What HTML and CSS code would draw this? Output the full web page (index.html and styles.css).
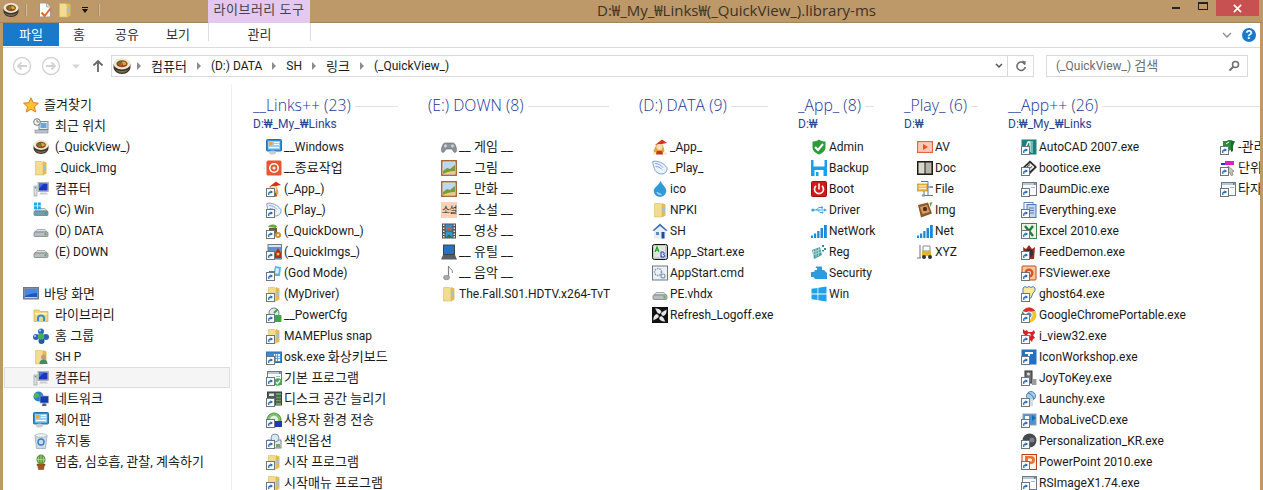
FILE: index.html
```html
<!DOCTYPE html>
<html lang="ko">
<head>
<meta charset="utf-8">
<title>(_QuickView_)</title>
<link rel="stylesheet" href="styles.css">
</head>
<body>
<svg class="defs" aria-hidden="true">
<defs>
<symbol id="kimbap" viewBox="0 0 16 16"><path d="M.5 6.500v2.500c0 3 3.200 6 7.500 6s7.500-3 7.500-6V6.500z" fill="#3a3226"/><path d="M1.500 10c1.500 3 4 4 6.500 4s5-1 6.500-4c-1 1.500-3 2.500-6.500 2.500S2.500 11.500 1.500 10z" fill="#7a6d58"/><ellipse cx="8" cy="6" rx="7.500" ry="5" fill="#efe7d0"/><ellipse cx="8" cy="6" rx="5" ry="3.200" fill="#8f4b26"/><path d="M4 6l3-2 2 1-2 3z" fill="#4d8a36"/><path d="M8 4l3 .5 1 2-3 1z" fill="#e1a92e"/><circle cx="7" cy="7" r="1" fill="#d94a2c"/></symbol>
<symbol id="folder" viewBox="0 0 16 16"><path d="M2.500 1.500h6l1.500 1v12.500H2.500z" fill="#f2dc8f" stroke="#d8b860" stroke-width=".6"/><path d="M10 1l3.500 1.500v11L10 15.500z" fill="#e3bb52"/><path d="M10.500 6l2.500-1v5l-2.500 1z" fill="#9fc1d8"/></symbol>
<symbol id="docchk" viewBox="0 0 16 16"><path d="M2.500 1h7l4 4v10h-11z" fill="#fff" stroke="#999"/><path d="M9.500 1v4h4" fill="#ddd" stroke="#999" stroke-width=".7"/><path d="M4.500 10.500l3 3.500 6-7.500" fill="none" stroke="#dd6a2c" stroke-width="2"/></symbol>
<symbol id="star" viewBox="0 0 16 16"><path d="M8 .8l2.200 4.800 5.200.6-3.900 3.500 1.100 5.200L8 12.300l-4.600 2.600 1.100-5.200L.6 6.200l5.200-.6z" fill="#fbc52f" stroke="#e07a1e"/></symbol>
<symbol id="recent" viewBox="0 0 16 16"><rect x="6" y="3.500" width="9" height="8" fill="#dfe7ee" stroke="#7c8994"/><rect x="7.500" y="5" width="6" height="5" fill="#6fa3d8"/><rect x="2" y="12" width="13" height="3" fill="#bfc6cc" stroke="#7c8994" stroke-width=".6"/><circle cx="4" cy="4" r="3.300" fill="#f4f6f8" stroke="#6b7680"/><path d="M4 2v2h2" fill="none" stroke="#444" stroke-width=".7"/></symbol>
<symbol id="pc" viewBox="0 0 16 16"><rect x="5" y="1.500" width="10.500" height="9" fill="#b9c0c6" stroke="#8e969c" stroke-width=".6"/><rect x="6" y="2.500" width="8.500" height="7" fill="#1a34c4"/><path d="M6 2.500h5l-5 5z" fill="#3e6fe6"/><path d="M7.500 11.500h6l1.500 2h-9z" fill="#c9ced2"/><rect x="1" y="5" width="3" height="10" fill="#dfe2e4" stroke="#8c9094" stroke-width=".6"/><rect x="1.800" y="6" width="1.400" height="1.400" fill="#45b04a"/></symbol>
<symbol id="drive" viewBox="0 0 16 16"><path d="M2 9l2-2.500h8L14 9z" fill="#dfe2e5" stroke="#8c9196" stroke-width=".7"/><rect x="1" y="9" width="14" height="4.500" rx="1" fill="#b8bdc2" stroke="#70767c" stroke-width=".7"/><rect x="11.500" y="10.300" width="2" height="2" fill="#5fa83c"/></symbol>
<symbol id="windrive" viewBox="0 0 16 16"><use href="#drive"/><g fill="#17a9f0"><path d="M1 .5h3v3H1zM4.800.5h3v3h-3zM1 4.300h3v3H1zM4.800 4.300h3v3h-3z"/></g><rect x="1" y="9" width="14" height="4.500" rx="1" fill="#3d8c9c" opacity=".6"/></symbol>
<symbol id="desktop" viewBox="0 0 16 16"><rect x=".5" y="1.500" width="15" height="11.500" fill="#7e8fa3" stroke="#6b7888"/><rect x="2" y="3" width="12" height="8" fill="#1f56c6"/><path d="M2 3h12v4c-4 0-8 1-12 3z" fill="#4b86e0"/><rect x="2" y="11" width="12" height="1" fill="#c7d1dc"/></symbol>
<symbol id="library" viewBox="0 0 16 16"><path d="M1 3h5l1 1.500h8v10H1z" fill="#f2d67b" stroke="#c9a24a" stroke-width=".6"/><path d="M2 6h12v1.500H2z" fill="#fff6cf"/><path d="M4 14v-3c0-2 1.500-3.500 4-3.500s4 1.500 4 3.500v3h-2v-3c0-1-1-1.500-2-1.500s-2 .5-2 1.500v3z" fill="#2f8fd8"/></symbol>
<symbol id="homegrp" viewBox="0 0 16 16"><circle cx="8" cy="3.500" r="3" fill="#2c6cc4"/><circle cx="3" cy="9" r="3" fill="#2c62bc"/><circle cx="13" cy="9" r="3" fill="#2c62bc"/><circle cx="8.500" cy="13" r="3" fill="#2456a8"/><circle cx="8" cy="8.500" r="3.200" fill="#46b04a"/><circle cx="7" cy="2.500" r="1" fill="#bcd8f4"/><circle cx="2" cy="8" r="1" fill="#bcd8f4"/></symbol>
<symbol id="folderusr" viewBox="0 0 16 16"><use href="#folder"/><circle cx="10.500" cy="8" r="2.500" fill="#c99b72"/><path d="M6.500 15c0-3 1.500-4.500 4-4.500s4 1.500 4 4.500z" fill="#3f8a68"/></symbol>
<symbol id="network" viewBox="0 0 16 16"><circle cx="5.500" cy="5.500" r="5" fill="#2a7fd0"/><path d="M3 2c2 0 3 1 3 2.500S4 6 3 7 1 5 1 4zM7 6l2.500-1 .5 3-2 2z" fill="#4fbe3e"/><rect x="7" y="5" width="8.500" height="7" fill="#123bb4" stroke="#9ba5ae" stroke-width=".7"/><path d="M9.500 12.500h3.500l.5 2.500h-4.500z" fill="#565e66"/></symbol>
<symbol id="cpl" viewBox="0 0 16 16"><rect x=".5" y=".5" width="15" height="11.500" rx="1" fill="#2e8fd6" stroke="#2870a6"/><rect x="2" y="2" width="12" height="8.500" fill="#9ad0f2"/><rect x="3" y="3" width="3.500" height="3.500" fill="#f0a63c"/><path d="M8 3.500h5M8 5.500h5M3 8.500h10" stroke="#fff"/><ellipse cx="6.500" cy="13.500" rx="3.500" ry="2" fill="#c8cccf"/></symbol>
<symbol id="recycle" viewBox="0 0 16 16"><path d="M2 2.500h12l-1.500 13h-9z" fill="#cfdbe4" stroke="#8ea0ad" stroke-width=".7"/><ellipse cx="8" cy="2.500" rx="6" ry="1.800" fill="#eef3f6" stroke="#8ea0ad" stroke-width=".6"/><circle cx="8" cy="9" r="3" fill="none" stroke="#3b7fc8" stroke-width="1.400"/></symbol>
<symbol id="plant" viewBox="0 0 16 16"><path d="M4 10h8v1.500h-.7L10.500 15.500h-5L4.700 11.500H4z" fill="#a8541e" stroke="#6c3410" stroke-width=".5"/><ellipse cx="8" cy="5.500" rx="4.500" ry="5" fill="#5c9a42"/><path d="M5.500 3v5M8 1.500v7M10.500 3v5M4 5.500h8" stroke="#c5dd9c" stroke-width=".7"/></symbol>
<symbol id="power" viewBox="0 0 16 16"><rect x=".5" y=".5" width="15" height="15" rx="1.500" fill="#e8552f"/><circle cx="8" cy="8" r="4.200" fill="none" stroke="#fff" stroke-width="1.600"/><circle cx="8" cy="8" r="1.500" fill="#fff"/></symbol>
<symbol id="boot" viewBox="0 0 16 16"><rect x=".5" y=".5" width="15" height="15" rx="1" fill="#d11a1a" stroke="#9b0e0e"/><path d="M5 4.800a4.500 4.500 0 1 0 6 0" fill="none" stroke="#fff" stroke-width="1.600"/><path d="M8 2.500v6" stroke="#fff" stroke-width="1.600"/></symbol>
<symbol id="girl" viewBox="0 0 16 16"><path d="M3 6L10 .5l5 3.500-5 1z" fill="#d8301e"/><path d="M4 6c2-1.500 6-1.500 7 0l1.500 6-2 3H3l-1.500-3z" fill="#e3a63c"/><circle cx="7.500" cy="8" r="3" fill="#fbdcc0"/><path d="M5 12h5l1 3.500H4z" fill="#c43526"/><path d="M1 14l3-1v2.500H1zM11 13l4 1v1.500h-4z" fill="#f2e6d0"/></symbol>
<symbol id="wing" viewBox="0 0 16 16"><path d="M.8 1.500c5-1.200 11 1.500 14 6 1 3-1.500 6.500-5 6.500-3.500 0-7-2.500-7.500-5.500C1.500 6 .8 4 .8 1.500z" fill="#edf3fb" stroke="#6a8fd0" stroke-width=".9"/><path d="M3 3.500c3 0 6 1.500 8 4M3.500 6.500c2.500 0 5 1 6.500 3" fill="none" stroke="#6a8fd0" stroke-width=".8"/></symbol>
<symbol id="qdown" viewBox="0 0 16 16"><path d="M3 5h8v8H3z" fill="#6e5b3e"/><path d="M2 4c2-3 5-3 9-1l-1 2z" fill="#68a83c"/><circle cx="12" cy="12" r="3" fill="#c89536"/><circle cx="12" cy="12" r="1" fill="#fff"/></symbol>
<symbol id="qimg" viewBox="0 0 16 16"><rect x="2" y=".5" width="13.500" height="14.500" fill="#5c94d0" stroke="#6b7b8b"/><path d="M2.500 1h12.500v2H2.500z" fill="#d8e4ef"/><path d="M9 9l3-5 3 5v5H9z" fill="#b52c18"/><circle cx="12" cy="10" r="1.500" fill="#f4c52e"/></symbol>
<symbol id="god" viewBox="0 0 16 16"><path d="M9 1l6 1-1 9H7z" fill="#5ab4ea"/><path d="M10 3l3 .5-.5 5H9z" fill="#d9f0fb"/><path d="M3 6h6l-1 7H2z" fill="#35a04c"/></symbol>
<symbol id="pcfg" viewBox="0 0 16 16"><circle cx="8" cy="6" r="5" fill="#e4e8ea" stroke="#72808a"/><path d="M8 6l3.500-3.500" stroke="#3ba23e" stroke-width="2"/><rect x="8" y="8" width="7.500" height="7" rx="1" fill="#3fa348"/></symbol>
<symbol id="osk" viewBox="0 0 16 16"><rect x=".5" y="3" width="15" height="10.500" fill="#3c8ad6" stroke="#2b6fb2"/><path d="M8 5h6v7H8z" fill="#fff"/><path d="M9.500 5v7M11.500 5v7M8 7.300h6M8 9.600h6" stroke="#3c8ad6" stroke-width=".8"/></symbol>
<symbol id="winapp" viewBox="0 0 16 16"><rect x="1.500" y="1.500" width="14" height="13" fill="#fafbfc" stroke="#707a82"/><rect x="2" y="2" width="13" height="2" fill="#b6c7d6"/><rect x="13" y="2.300" width="1.500" height="1.300" fill="#555"/><rect x="10" y="6" width="4" height="1" fill="#aab5bf"/></symbol>
<symbol id="defp" viewBox="0 0 16 16"><use href="#winapp"/><circle cx="12" cy="12" r="3.800" fill="#3fb04a"/><path d="M10 12l1.500 1.700L14 10.500" fill="none" stroke="#fff" stroke-width="1.300"/></symbol>
<symbol id="disk" viewBox="0 0 16 16"><rect x="1.500" y="1" width="14" height="13" fill="#4c5954" stroke="#38423e"/><rect x="3" y="2.500" width="5" height="2.500" fill="#dfe7e2"/><rect x="10" y="2" width="5" height="12" fill="#6f9a6f"/><path d="M10 5h5M10 8h5M10 11h5" stroke="#2f3a35"/></symbol>
<symbol id="xfer" viewBox="0 0 16 16"><circle cx="8" cy="8" r="7" fill="#7cc46c" stroke="#4a9444"/><circle cx="8" cy="8" r="4.200" fill="#dff2d4"/><rect x="9" y="9" width="7" height="6" fill="#2238b8"/></symbol>
<symbol id="idx" viewBox="0 0 16 16"><rect x="2" y="7" width="13" height="8" fill="#e6e9ec" stroke="#7d868e"/><circle cx="9" cy="5" r="4" fill="#d7e8f6" stroke="#7f97ad"/><rect x="10" y="11" width="4" height="3.500" fill="#78a860"/></symbol>
<symbol id="pad" viewBox="0 0 16 16"><path d="M4 4h8c2 0 3.500 4 3.500 7.500 0 2-2 2.500-3 1L11 10H5l-1.500 2.500c-1 1.500-3 1-3-1C.5 8 2 4 4 4z" fill="#8d9398" stroke="#5e6368" stroke-width=".6"/><circle cx="4.500" cy="7" r="1.400" fill="#d5d8db"/><circle cx="11.500" cy="7" r="1.400" fill="#d5d8db"/></symbol>
<symbol id="pic" viewBox="0 0 16 16"><rect x=".8" y=".8" width="14.400" height="14.400" fill="#fff" stroke="#9b5a27" stroke-width="1.400"/><rect x="2" y="2" width="12" height="12" fill="#bcd9f2"/><path d="M2 11l4-3 3 1 5-4v6c-3 1-6 1-8 3H2z" fill="#7a9b38"/><path d="M2 14c3-2 8-3 12-3v3z" fill="#eccb85"/></symbol>
<symbol id="film" viewBox="0 0 16 16"><rect x="1" y=".5" width="14" height="15" fill="#4d4f52"/><path d="M2 1.500h1.500v1.500H2zM2 4.500h1.500V6H2zM2 7.500h1.500V9H2zM2 10.500h1.500V12H2zM2 13h1.500v1.500H2zM12.500 1.500H14v1.500h-1.500zM12.500 4.500H14V6h-1.500zM12.500 7.500H14V9h-1.500zM12.500 10.500H14V12h-1.500zM12.500 13H14v1.500h-1.500z" fill="#e4e4e4"/><rect x="4.500" y="1.500" width="7" height="6" fill="#3f88c8"/><path d="M4.500 7.500L8 4l3.500 3.500z" fill="#c85f30"/><rect x="4.500" y="8.500" width="7" height="6" fill="#2a9ad0"/><path d="M4.500 14.500l3.500-3 3.500 3z" fill="#3f6a3c"/></symbol>
<symbol id="laptop" viewBox="0 0 16 16"><rect x="2.500" y="1" width="11" height="9.500" fill="#2a6fc0" stroke="#3e444a"/><path d="M2 11h12l2 4.500H0z" fill="#585e64"/></symbol>
<symbol id="note" viewBox="0 0 16 16"><path d="M7.500 1v11" stroke="#808488" stroke-width="1.200"/><path d="M7.500 1c1 3 4.500 3 4 7" fill="none" stroke="#808488"/><ellipse cx="5.500" cy="12.500" rx="3" ry="2.300" fill="#a6aaad" stroke="#808488" stroke-width=".6"/></symbol>
<symbol id="drop" viewBox="0 0 16 16"><path d="M8.500 .5c2 4 5.500 6 5.500 9.500a6 5.500 0 0 1-12 0C2 6.500 7 4.500 8.500 .5z" fill="#2f9ad8" stroke="#1f7fb8" stroke-width=".5"/><path d="M5 11c1 2 3 2.500 4.500 2.500" fill="none" stroke="#a7dcf5" stroke-width="1.300"/></symbol>
<symbol id="house" viewBox="0 0 16 16"><path d="M8 .5l7.500 7H14v8H2v-8H.5z" fill="#e8eef3"/><path d="M8 .5l7.500 7-1.500.5L8 3 2 8 .5 7.500z" fill="#3f74bc"/><rect x="9.500" y="9" width="3" height="6.500" fill="#1f4e96"/><rect x="4" y="9" width="3" height="3" fill="#5b8ac8"/></symbol>
<symbol id="abexe" viewBox="0 0 16 16"><rect x=".5" y=".5" width="15" height="15" rx="2" fill="#c4ccc4" stroke="#111"/><rect x="2" y="2" width="11" height="11" fill="#dfe5df"/><path d="M3 8l2-5 2 5M3.800 6.300h2.400" fill="none" stroke="#14a014" stroke-width="1.100"/><path d="M9 8v5h3c1 0 1-2.500-.5-2.500C12.500 10.500 12.500 8 11 8z" fill="none" stroke="#1a2fd0"/></symbol>
<symbol id="cmd" viewBox="0 0 16 16"><rect x=".5" y="1" width="15" height="14" fill="#eef1f4" stroke="#6d7882"/><circle cx="6" cy="7" r="3.500" fill="none" stroke="#7f99b0" stroke-width="1.500" stroke-dasharray="1.500 1"/><circle cx="11" cy="11" r="2" fill="none" stroke="#7f99b0" stroke-width="1.200"/></symbol>
<symbol id="fan" viewBox="0 0 16 16"><rect width="16" height="16" fill="#111"/><path d="M7.500 7c-3-1-3-4-4.500-5.500 3-.5 6 1 6.500 3.500zM9 7c1-3 4-3 5.500-4.500.5 3-1 6-3.500 6.500zM9 9c3 1 3 4 4.500 5.500-3 .5-6-1-6.500-3.500zM7 9c-1 3-4 3-5.500 4.500C1 10.500 2.500 7.500 5 7z" fill="#e6e6e6"/></symbol>
<symbol id="shield" viewBox="0 0 16 16"><path d="M8 .5c2 1.500 4 2 6.500 2v6c0 3.500-3 5.500-6.500 7-3.500-1.500-6.500-3.500-6.500-7v-6C4 2.500 6 2 8 .5z" fill="#2d9a3c"/><path d="M4 8l3 3 5-6" fill="none" stroke="#fff" stroke-width="2"/></symbol>
<symbol id="floppy" viewBox="0 0 16 16"><path d="M0 0h2.500v6.500h11V0H16v16H0z" fill="#19a0ec"/><rect x="3.500" y="10" width="9" height="6" fill="#fff"/><rect x="5" y="12" width="2.500" height="4" fill="#19a0ec"/></symbol>
<symbol id="usb" viewBox="0 0 16 16"><path d="M2 8h12M5 8l3-2.500h2.500M6.500 8l2.500 2.500h2" fill="none" stroke="#36a3e4"/><circle cx="1.800" cy="8" r="1.500" fill="#36a3e4"/><path d="M13 6.500l3 1.500-3 1.500z" fill="#36a3e4"/><rect x="10" y="4.500" width="2" height="2" fill="#36a3e4"/><circle cx="11.500" cy="10.500" r="1" fill="#36a3e4"/></symbol>
<symbol id="signal" viewBox="0 0 16 16"><g fill="#1e88d8"><rect x="0" y="12.500" width="2" height="2.500"/><rect x="3" y="10.500" width="2.200" height="4.500"/><rect x="6.200" y="8" width="2.300" height="7"/><rect x="9.500" y="5" width="2.500" height="10"/><rect x="13" y="2" width="2.800" height="13"/></g></symbol>
<symbol id="reg" viewBox="0 0 16 16"><path d="M1 6l8-3 2 8-8 4z" fill="#4aa0a8"/><path d="M2.500 6v7M5 5v8M7.500 4v8M1.500 8.500l8-3M2 11l8-3" stroke="#d6ecec" stroke-width=".6"/><path d="M11 1h2v2h-2zM13 4h2v2h-2zM11 6h2v1.500h-2z" fill="#2f8f98"/></symbol>
<symbol id="secu" viewBox="0 0 16 16"><path d="M0 7h3l1-2h2V3h5v2h2l3 3v6H4l-1.500-2H0z" fill="#2e9ae2"/><rect x="5" y="1.500" width="6" height="1.500" fill="#2e9ae2"/></symbol>
<symbol id="win" viewBox="0 0 16 16"><path d="M.5 2.700l6-.8v5.700h-6zM7.300 1.800L15.500.5v7.100H7.300zM.5 8.400h6v5.700l-6-.8zM7.300 8.400h8.200v7.100l-8.200-1.300z" fill="#1fa2e8"/></symbol>
<symbol id="av" viewBox="0 0 16 16"><rect x=".7" y="2.700" width="14.600" height="10.600" fill="#fff" stroke="#e8633c" stroke-width="1.400"/><rect x="2" y="4" width="12" height="8" fill="#f7c8b4"/><path d="M6 5l5 3-5 3z" fill="#e8502a"/></symbol>
<symbol id="book" viewBox="0 0 16 16"><rect x="0" y="1" width="16" height="14" fill="#1d1a14"/><rect x="1.500" y="2.500" width="6" height="11" fill="#d9d7cb"/><rect x="8.500" y="2.500" width="6" height="11" fill="#b6b4a8"/></symbol>
<symbol id="ftree" viewBox="0 0 16 16"><rect x=".5" y="3" width="10" height="7" fill="#f4b84a" stroke="#c88a2a" stroke-width=".7"/><path d="M2 5h7M2 7.500h7" stroke="#fff6d8"/><path d="M4 .5h7M11 .5v14M5 14.500h11M11 6h4M7 10v4.500" fill="none" stroke="#5c7a98"/><rect x="13" y="5" width="3" height="2" fill="#7d96b0"/><rect x="5" y="13.500" width="3" height="2" fill="#7d96b0"/></symbol>
<symbol id="imgi" viewBox="0 0 16 16"><path d="M1 3l10-2.500 4 11L4 15.500z" fill="#8a5a2c"/><path d="M3 5l7-2 2.500 7-7 2z" fill="#d9a066"/><circle cx="8" cy="7" r="2.200" fill="#5a2f14"/><path d="M12.500 1l3-1-2 5z" fill="#62a23f"/></symbol>
<symbol id="lift" viewBox="0 0 16 16"><path d="M3 1v13M0 14h4" stroke="#7c7c78" stroke-width="1.100"/><path d="M6 2h7v5H6z" fill="none" stroke="#8c8c88"/><path d="M5 7h9v5H5z" fill="#e0b62e"/><circle cx="7" cy="13" r="2" fill="#333"/><circle cx="13" cy="13" r="2" fill="#333"/></symbol>
<symbol id="acad" viewBox="0 0 16 16"><rect x=".5" y=".5" width="15" height="15" fill="#1f7f7a"/><path d="M3 13L7 3h2v10" fill="none" stroke="#fff" stroke-width="1.300"/><path d="M11 2v12" stroke="#8fd4cc" stroke-width="1.400"/></symbol>
<symbol id="bootice" viewBox="0 0 16 16"><path d="M9 .5L16 7 8 15 1 8z" fill="#2a2a2a"/><path d="M9 3l4.500 4L8 12 3.500 8z" fill="#f0f0f0"/><path d="M6 7l3-2.500M8 9l3-2.500" stroke="#333"/></symbol>
<symbol id="every" viewBox="0 0 16 16"><rect x="3" y=".5" width="9" height="12" fill="#fff" stroke="#5f86c0"/><rect x="6" y="2.500" width="9" height="13" fill="#c3d7f2" stroke="#4f76b4"/><path d="M8 6h5M8 8.500h5M8 11h5" stroke="#4f76b4"/></symbol>
<symbol id="excel" viewBox="0 0 16 16"><rect x=".5" y=".5" width="15" height="15" fill="#e9f3e6" stroke="#3a8a4c"/><path d="M4 3l8 10M12 3L4 13" stroke="#1e7a3a" stroke-width="2.400"/></symbol>
<symbol id="feed" viewBox="0 0 16 16"><path d="M2 3l3 2 3-4 3 4 3-2-1 12H3z" fill="#9c2a1c"/><circle cx="8" cy="9" r="4" fill="#333"/></symbol>
<symbol id="fsv" viewBox="0 0 16 16"><rect x="1" y="1" width="14" height="14" rx="1" fill="#f7c89a" stroke="#c24a1c"/><circle cx="8" cy="8" r="4.500" fill="#d9502a"/><circle cx="8" cy="8" r="2" fill="#fff0dc"/></symbol>
<symbol id="ghost" viewBox="0 0 16 16"><path d="M2 2l2-1.500 2 1 2-1 2 1 2-1 2 1.500v3L12 7l-2 5H4L2 7z" fill="#f6e79a" stroke="#4b7fc4"/></symbol>
<symbol id="chrome" viewBox="0 0 16 16"><path d="M8 .5A7.500 7.500 0 0 1 14.500 4.300L8 5z" fill="#d93025"/><path d="M1.500 4.300A7.500 7.500 0 0 1 8 .5h1v4.500H5z" fill="#d93025"/><path d="M14.500 4.300A7.500 7.500 0 0 1 8 15.500L11 9V5z" fill="#f5c22a"/><path d="M8 15.500A7.500 7.500 0 0 1 1.500 4.300L6 10z" fill="#3aa24c"/><circle cx="8" cy="8" r="3.200" fill="#4a90e2" stroke="#fff"/></symbol>
<symbol id="iview" viewBox="0 0 16 16"><path d="M2 1l2 2 2-1 1 2 4 0 2-2 1 3-2 2 2 3-2 1-1 3-2-2-3 2-1-3-3-1 2-3-2-2z" fill="#dc1e1e"/><circle cx="8" cy="7" r="1.800" fill="#fff"/></symbol>
<symbol id="iconw" viewBox="0 0 16 16"><rect x=".5" y=".5" width="15" height="15" fill="#1f72c4"/><path d="M4 3h8v2H9v8H7V5H4z" fill="#fff"/></symbol>
<symbol id="joy" viewBox="0 0 16 16"><rect x="4" y="1" width="7" height="12" fill="#6e7276" stroke="#333"/><rect x="11" y="9" width="4.500" height="6" fill="#9a9ea2"/><circle cx="7.500" cy="4" r="1.500" fill="#ddd"/></symbol>
<symbol id="launchy" viewBox="0 0 16 16"><circle cx="10" cy="5" r="4.500" fill="#a8cde8" stroke="#4f88b8"/><rect x="3" y="8" width="9" height="7" fill="#d6dee5"/><path d="M7 2c3 1 5 3 6 6" fill="none" stroke="#2b78b8"/></symbol>
<symbol id="moba" viewBox="0 0 16 16"><rect x="2" y="2" width="13" height="11" fill="#4e93cc" stroke="#8aa2b8"/><rect x="4" y="4" width="4" height="3" fill="#fff"/><path d="M11 3l4 3-4 3z" fill="#1e6bb0"/></symbol>
<symbol id="perso" viewBox="0 0 16 16"><circle cx="8.500" cy="7.500" r="7" fill="#454a4e"/><circle cx="11" cy="7" r="2.500" fill="#7c8287"/></symbol>
<symbol id="ppt" viewBox="0 0 16 16"><rect x="1" y=".5" width="14.500" height="15" fill="#fdf2ea" stroke="#c23c14"/><path d="M4 2h6a3.500 3.500 0 0 1 0 8H7v4H4z" fill="#e9743a"/><path d="M7 4.500h2.500a1.200 1.200 0 0 1 0 3H7z" fill="#fdf2ea"/></symbol>
<symbol id="gfold" viewBox="0 0 16 16"><path d="M3 2h4l1-1h5l-2 1v9l-8 3z" fill="#2b8a3c"/><path d="M11 2h4l-2 5v5l-2 1z" fill="#1b6a2c"/><path d="M6 5l3-2" stroke="#fff"/></symbol>
<symbol id="unit" viewBox="0 0 16 16"><rect x="5" y="1" width="9" height="4" fill="#e41ec4"/><rect x="1" y="3" width="4" height="2" fill="#2438c8"/><path d="M8 6l6 5-2 1 1 3-2 .5-1-3-2 1z" fill="#c7c7b8" stroke="#555" stroke-width=".5"/></symbol>
<symbol id="sc" viewBox="0 0 9 9"><rect x=".5" y=".5" width="8" height="8" fill="#fff" stroke="#6c747c"/><path d="M2.200 7V5.300c0-1.300 1-1.900 2.300-1.900V2.200L7 4 4.500 5.800V4.700c-.8 0-1.100.4-1.100 1.100V7z" fill="#1662b8"/></symbol>
</defs>
</svg>

<div class="window">
  <header class="titlebar">
    <div class="qat">
      <svg class="ic"><use href="#kimbap"/></svg>
      <i class="qsep"></i>
      <svg class="ic"><use href="#docchk"/></svg>
      <svg class="ic qfold"><use href="#folder"/></svg>
      <svg class="qdrop" viewBox="0 0 8 8"><path d="M1 1h6v1H1zM1 3h6L4 7z" fill="#111"/></svg>
      <i class="qsep"></i>
    </div>
    <div class="ctx">라이브러리 도구</div>
    <div class="title">D:₩_My_₩Links₩(_QuickView_).library-ms</div>
    <div class="winbtns">
      <i class="wmin"></i>
      <i class="wmax"></i>
      <div class="wclose"><svg viewBox="0 0 10 10"><path d="M1 1l8 8M9 1l-8 8" stroke="#fff" stroke-width="1.800"/></svg></div>
    </div>
  </header>

  <main class="frame">
    <nav class="ribbon">
      <div class="tab file">파일</div>
      <div class="tab t-home">홈</div>
      <div class="tab t-share">공유</div>
      <div class="tab t-view">보기</div>
      <div class="tab t-manage">관리</div>
      <svg class="chev" viewBox="0 0 10 6"><path d="M1 1l4 4 4-4" fill="none" stroke="#8a8a8a" stroke-width="1.300"/></svg>
      <div class="help">?</div>
    </nav>

    <div class="addr">
      <svg class="navb" viewBox="0 0 20 20"><circle cx="10" cy="10" r="8.500" fill="none" stroke="#d2d2d2" stroke-width="1.400"/><path d="M15 10H6M9.500 6.500L6 10l3.500 3.500" fill="none" stroke="#d2d2d2" stroke-width="1.800"/></svg>
      <svg class="navb" viewBox="0 0 20 20"><circle cx="10" cy="10" r="8.500" fill="none" stroke="#d2d2d2" stroke-width="1.400"/><path d="M5 10h9M10.500 6.500L14 10l-3.500 3.500" fill="none" stroke="#d2d2d2" stroke-width="1.800"/></svg>
      <svg class="navd" viewBox="0 0 8 5"><path d="M0 .5h8L4 4.500z" fill="#d4d4d4"/></svg>
      <svg class="navu" viewBox="0 0 12 14"><path d="M6 13V2M1.500 6.500L6 2l4.500 4.500" fill="none" stroke="#666" stroke-width="1.800"/></svg>
      <div class="crumbs">
        <svg class="ic crumbic"><use href="#kimbap"/></svg>
        <span class="sep"></span><span class="ko">컴퓨터</span>
        <span class="sep"></span><span>(D:) DATA</span>
        <span class="sep"></span><span>SH</span>
        <span class="sep"></span><span class="ko">링크</span>
        <span class="sep"></span><span>(_QuickView_)</span>
        <svg class="adown" viewBox="0 0 8 6"><path d="M1 1l3 3 3-3" fill="none" stroke="#555" stroke-width="1.500"/></svg>
        <div class="refresh"><svg viewBox="0 0 12 12"><path d="M10 4.500A4.200 4.200 0 1 0 10.300 7" fill="none" stroke="#6e6e6e" stroke-width="1.600"/><path d="M7 .5l3.800 1L10 5.300z" fill="#6e6e6e"/></svg></div>
      </div>
      <div class="search">
        <span>(_QuickView_) <span class="ko">검색</span></span>
        <svg viewBox="0 0 12 12"><circle cx="7.500" cy="4.500" r="3" fill="none" stroke="#6e6e6e" stroke-width="1.500"/><path d="M5.300 6.700L1.500 10.500" stroke="#6e6e6e" stroke-width="2"/></svg>
      </div>
    </div>

    <div class="body">
      <aside class="side">
        <ul class="tree">
          <li class="root ko"><svg class="ic"><use href="#star"/></svg>즐겨찾기</li>
          <li class="leaf ko"><svg class="ic"><use href="#recent"/></svg>최근 위치</li>
          <li class="leaf"><svg class="ic"><use href="#kimbap"/></svg>(_QuickView_)</li>
          <li class="leaf"><svg class="ic"><use href="#folder"/></svg>_Quick_Img</li>
          <li class="leaf ko"><svg class="ic"><use href="#pc"/></svg>컴퓨터</li>
          <li class="leaf"><svg class="ic"><use href="#windrive"/></svg>(C) Win</li>
          <li class="leaf"><svg class="ic"><use href="#drive"/></svg>(D) DATA</li>
          <li class="leaf"><svg class="ic"><use href="#drive"/></svg>(E) DOWN</li>
        </ul>
        <ul class="tree tree2">
          <li class="root ko"><svg class="ic"><use href="#desktop"/></svg>바탕 화면</li>
          <li class="leaf ko"><svg class="ic"><use href="#library"/></svg>라이브러리</li>
          <li class="leaf ko"><svg class="ic"><use href="#homegrp"/></svg>홈 그룹</li>
          <li class="leaf"><svg class="ic"><use href="#folderusr"/></svg>SH P</li>
          <li class="leaf sel ko"><svg class="ic"><use href="#pc"/></svg>컴퓨터</li>
          <li class="leaf ko"><svg class="ic"><use href="#network"/></svg>네트워크</li>
          <li class="leaf ko"><svg class="ic"><use href="#cpl"/></svg>제어판</li>
          <li class="leaf ko"><svg class="ic"><use href="#recycle"/></svg>휴지통</li>
          <li class="leaf ko"><svg class="ic"><use href="#plant"/></svg>멈춤, 심호흡, 관찰, 계속하기</li>
        </ul>
      </aside>

      <section class="content">
        <div class="group g1">
          <h2><span>__Links++ (23)</span><i></i></h2>
          <p class="path">D:₩_My_₩Links</p>
          <ul class="items">
            <li><svg class="ic"><use href="#cpl"/></svg>__Windows</li>
            <li class="mx"><svg class="ic"><use href="#power"/></svg><span>__<span class="ko">종료작업</span></span></li>
            <li><span class="ico"><svg class="ic"><use href="#girl"/></svg><svg class="sc"><use href="#sc"/></svg></span>(_App_)</li>
            <li><span class="ico"><svg class="ic"><use href="#wing"/></svg><svg class="sc"><use href="#sc"/></svg></span>(_Play_)</li>
            <li><span class="ico"><svg class="ic"><use href="#qdown"/></svg><svg class="sc"><use href="#sc"/></svg></span>(_QuickDown_)</li>
            <li><span class="ico"><svg class="ic"><use href="#qimg"/></svg><svg class="sc"><use href="#sc"/></svg></span>(_QuickImgs_)</li>
            <li><span class="ico"><svg class="ic"><use href="#god"/></svg><svg class="sc"><use href="#sc"/></svg></span>(God Mode)</li>
            <li><span class="ico"><svg class="ic"><use href="#folder"/></svg><svg class="sc"><use href="#sc"/></svg></span>(MyDriver)</li>
            <li><span class="ico"><svg class="ic"><use href="#pcfg"/></svg><svg class="sc"><use href="#sc"/></svg></span>__PowerCfg</li>
            <li><span class="ico"><svg class="ic"><use href="#folder"/></svg><svg class="sc"><use href="#sc"/></svg></span>MAMEPlus snap</li>
            <li class="mx"><span class="ico"><svg class="ic"><use href="#osk"/></svg><svg class="sc"><use href="#sc"/></svg></span><span>osk.exe <span class="ko">화상키보드</span></span></li>
            <li class="ko"><span class="ico"><svg class="ic"><use href="#defp"/></svg><svg class="sc"><use href="#sc"/></svg></span>기본 프로그램</li>
            <li class="ko"><span class="ico"><svg class="ic"><use href="#disk"/></svg><svg class="sc"><use href="#sc"/></svg></span>디스크 공간 늘리기</li>
            <li class="ko"><span class="ico"><svg class="ic"><use href="#xfer"/></svg><svg class="sc"><use href="#sc"/></svg></span>사용자 환경 전송</li>
            <li class="ko"><span class="ico"><svg class="ic"><use href="#idx"/></svg><svg class="sc"><use href="#sc"/></svg></span>색인옵션</li>
            <li class="ko"><span class="ico"><svg class="ic"><use href="#folder"/></svg><svg class="sc"><use href="#sc"/></svg></span>시작 프로그램</li>
            <li class="ko"><span class="ico"><svg class="ic"><use href="#folder"/></svg><svg class="sc"><use href="#sc"/></svg></span>시작매뉴 프로그램</li>
          </ul>
        </div>

        <div class="group g2">
          <h2><span>(E:) DOWN (8)</span><i></i></h2>
          <p class="path"></p>
          <ul class="items">
            <li class="ko"><svg class="ic"><use href="#pad"/></svg>__ 게임 __</li>
            <li class="ko"><svg class="ic"><use href="#pic"/></svg>__ 그림 __</li>
            <li class="ko"><svg class="ic"><use href="#pic"/></svg>__ 만화 __</li>
            <li class="ko"><span class="txtic">소설</span>__ 소설 __</li>
            <li class="ko"><svg class="ic"><use href="#film"/></svg>__ 영상 __</li>
            <li class="ko"><svg class="ic"><use href="#laptop"/></svg>__ 유틸 __</li>
            <li class="ko"><svg class="ic"><use href="#note"/></svg>__ 음악 __</li>
            <li><svg class="ic"><use href="#folder"/></svg>The.Fall.S01.HDTV.x264-TvT</li>
          </ul>
        </div>

        <div class="group g3">
          <h2><span>(D:) DATA (9)</span><i></i></h2>
          <p class="path"></p>
          <ul class="items">
            <li><svg class="ic"><use href="#girl"/></svg>_App_</li>
            <li><svg class="ic"><use href="#wing"/></svg>_Play_</li>
            <li><svg class="ic"><use href="#drop"/></svg>ico</li>
            <li><svg class="ic"><use href="#folder"/></svg>NPKI</li>
            <li><svg class="ic"><use href="#house"/></svg>SH</li>
            <li><svg class="ic"><use href="#abexe"/></svg>App_Start.exe</li>
            <li><svg class="ic"><use href="#cmd"/></svg>AppStart.cmd</li>
            <li><svg class="ic"><use href="#drive"/></svg>PE.vhdx</li>
            <li><svg class="ic"><use href="#fan"/></svg>Refresh_Logoff.exe</li>
          </ul>
        </div>

        <div class="group g4">
          <h2><span>_App_ (8)</span><i></i></h2>
          <p class="path">D:₩</p>
          <ul class="items">
            <li><svg class="ic"><use href="#shield"/></svg>Admin</li>
            <li><svg class="ic"><use href="#floppy"/></svg>Backup</li>
            <li><svg class="ic"><use href="#boot"/></svg>Boot</li>
            <li><svg class="ic"><use href="#usb"/></svg>Driver</li>
            <li><svg class="ic"><use href="#signal"/></svg>NetWork</li>
            <li><svg class="ic"><use href="#reg"/></svg>Reg</li>
            <li><svg class="ic"><use href="#secu"/></svg>Security</li>
            <li><svg class="ic"><use href="#win"/></svg>Win</li>
          </ul>
        </div>

        <div class="group g5">
          <h2><span>_Play_ (6)</span><i></i></h2>
          <p class="path">D:₩</p>
          <ul class="items">
            <li><svg class="ic"><use href="#av"/></svg>AV</li>
            <li><svg class="ic"><use href="#book"/></svg>Doc</li>
            <li><svg class="ic"><use href="#ftree"/></svg>File</li>
            <li><svg class="ic"><use href="#imgi"/></svg>Img</li>
            <li><svg class="ic"><use href="#signal"/></svg>Net</li>
            <li><svg class="ic"><use href="#lift"/></svg>XYZ</li>
          </ul>
        </div>

        <div class="group g6">
          <h2><span>__App++ (26)</span><i></i></h2>
          <p class="path">D:₩_My_₩Links</p>
          <div class="cols">
            <ul class="items">
              <li><span class="ico"><svg class="ic"><use href="#acad"/></svg><svg class="sc"><use href="#sc"/></svg></span>AutoCAD 2007.exe</li>
              <li><span class="ico"><svg class="ic"><use href="#bootice"/></svg><svg class="sc"><use href="#sc"/></svg></span>bootice.exe</li>
              <li><span class="ico"><svg class="ic"><use href="#winapp"/></svg><svg class="sc"><use href="#sc"/></svg></span>DaumDic.exe</li>
              <li><span class="ico"><svg class="ic"><use href="#every"/></svg><svg class="sc"><use href="#sc"/></svg></span>Everything.exe</li>
              <li><span class="ico"><svg class="ic"><use href="#excel"/></svg><svg class="sc"><use href="#sc"/></svg></span>Excel 2010.exe</li>
              <li><span class="ico"><svg class="ic"><use href="#feed"/></svg><svg class="sc"><use href="#sc"/></svg></span>FeedDemon.exe</li>
              <li><span class="ico"><svg class="ic"><use href="#fsv"/></svg><svg class="sc"><use href="#sc"/></svg></span>FSViewer.exe</li>
              <li><span class="ico"><svg class="ic"><use href="#ghost"/></svg><svg class="sc"><use href="#sc"/></svg></span>ghost64.exe</li>
              <li><span class="ico"><svg class="ic"><use href="#chrome"/></svg><svg class="sc"><use href="#sc"/></svg></span>GoogleChromePortable.exe</li>
              <li><span class="ico"><svg class="ic"><use href="#iview"/></svg><svg class="sc"><use href="#sc"/></svg></span>i_view32.exe</li>
              <li><span class="ico"><svg class="ic"><use href="#iconw"/></svg><svg class="sc"><use href="#sc"/></svg></span>IconWorkshop.exe</li>
              <li><span class="ico"><svg class="ic"><use href="#joy"/></svg><svg class="sc"><use href="#sc"/></svg></span>JoyToKey.exe</li>
              <li><span class="ico"><svg class="ic"><use href="#launchy"/></svg><svg class="sc"><use href="#sc"/></svg></span>Launchy.exe</li>
              <li><span class="ico"><svg class="ic"><use href="#moba"/></svg><svg class="sc"><use href="#sc"/></svg></span>MobaLiveCD.exe</li>
              <li><span class="ico"><svg class="ic"><use href="#perso"/></svg><svg class="sc"><use href="#sc"/></svg></span>Personalization_KR.exe</li>
              <li><span class="ico"><svg class="ic"><use href="#ppt"/></svg><svg class="sc"><use href="#sc"/></svg></span>PowerPoint 2010.exe</li>
              <li><span class="ico"><svg class="ic"><use href="#winapp"/></svg><svg class="sc"><use href="#sc"/></svg></span>RSImageX1.74.exe</li>
            </ul>
            <ul class="items">
              <li class="ko"><span class="ico"><svg class="ic"><use href="#gfold"/></svg><svg class="sc"><use href="#sc"/></svg></span>-관리 도구</li>
              <li class="ko"><span class="ico"><svg class="ic"><use href="#unit"/></svg><svg class="sc"><use href="#sc"/></svg></span>단위 변환</li>
              <li class="ko"><span class="ico"><svg class="ic"><use href="#winapp"/></svg><svg class="sc"><use href="#sc"/></svg></span>타자 연습</li>
            </ul>
          </div>
        </div>
      </section>
    </div>
  </main>
</div>
</body>
</html>
```

FILE: styles.css
```css
* { box-sizing: border-box; }
html, body { margin: 0; padding: 0; height: 490px; overflow: hidden; }
body { font: 12px/21px Roboto, "Noto Sans CJK KR", sans-serif; color: #1a1a1a; background: #bd9868; }
ul, h2, p { margin: 0; padding: 0; list-style: none; font-weight: normal; }
.ko { font-size: 13px; }
.defs { position: absolute; width: 0; height: 0; }
.ic { width: 16px; height: 16px; flex: none; display: block; }

.window { height: 490px; display: flex; flex-direction: column; overflow: hidden; }

.titlebar { height: 23px; flex: none; display: flex; background: #bd9868; border-bottom: 1px solid #a58457; position: relative; }
.qat { display: flex; align-items: center; width: 208px; height: 20px; padding-left: 3px; }
.qat .qsep { width: 2px; height: 12px; background: #a58b66; border-right: 1px solid #d6bd97; margin: 0 10px 0 6px; }
.qat .qfold { margin-left: 4px; }
.qdrop { width: 8px; height: 8px; margin-left: 8px; }
.qat .qdrop + .qsep { margin-left: 9px; }
.ctx { width: 102px; height: 23px; background: #e5c8f1; text-align: center; font-size: 13px; line-height: 20px; color: #444; letter-spacing: .5px; }
.title { margin-left: 287px; width: 400px; font: 15px/20px "Open Sans", "Noto Sans CJK KR", sans-serif; color: #3b3326; white-space: nowrap; }
.winbtns { display: flex; margin-left: auto; margin-right: 4px; height: 15px; align-items: flex-start; }
.wmin { width: 8px; height: 2px; background: #222; margin: 7px 18px 0 0; }
.wmax { width: 10px; height: 8px; border: 1px solid #222; border-top-width: 2px; margin: 2px 8px 0 0; }
.wclose { width: 43px; height: 16px; background: #c75050; display: flex; align-items: center; justify-content: center; }
.wclose svg { width: 9px; height: 9px; }

.frame { flex: 1; margin: 0 3px; background: #fff; display: flex; flex-direction: column; min-height: 0; }

.ribbon { height: 25px; flex: none; display: flex; align-items: stretch; border-bottom: 1px solid #dadbdc; position: relative; }
.tab { font-size: 13px; line-height: 23px; text-align: center; color: #333; }
.tab.file { width: 56px; background: #1979ca; color: #fff; height: 23px; }
.t-home { width: 40px; }
.t-share { width: 56px; }
.t-view { width: 46px; }
.t-manage { width: 103px; margin-left: 7px; border-left: 1px solid #dfdfdf; border-right: 1px solid #dfdfdf; height: 18px; line-height: 23px; overflow: visible; }
.chev { width: 10px; height: 6px; margin: 9px 0 0 auto; }
.help { width: 14px; height: 14px; border-radius: 50%; background: #1979ca; color: #fff; font: bold 12px/14px "Liberation Sans", sans-serif; text-align: center; margin: 5px 4px 0 10px; }

.addr { height: 36px; flex: none; display: flex; align-items: center; padding: 0 12px 0 9px; }
.navb { width: 20px; height: 20px; margin-right: 9px; flex: none; }
.navd { width: 8px; height: 5px; margin: 0 12px 0 2px; flex: none; }
.navu { width: 12px; height: 14px; flex: none; margin-right: 7px; }
.crumbs { width: 923px; height: 22px; border: 1px solid #d9d9d9; display: flex; align-items: center; padding-left: 1px; }
.crumbic { width: 18px; height: 18px; margin-right: 6px; }
.sep { width: 0; height: 0; border-left: 4px solid #8c8c8c; border-top: 4px solid transparent; border-bottom: 4px solid transparent; margin: 0 10px; }
.crumbic + .sep { margin-left: 0; }
.adown { width: 8px; height: 6px; margin-left: auto; }
.refresh { width: 26px; height: 20px; margin-left: 4px; border-left: 1px solid #d9d9d9; display: flex; align-items: center; justify-content: center; }
.refresh svg { width: 12px; height: 12px; }
.search { width: 202px; height: 22px; margin-left: 12px; border: 1px solid #d9d9d9; display: flex; align-items: center; justify-content: space-between; padding: 0 7px 0 9px; color: #6d6d6d; }
.search svg { width: 12px; height: 12px; }

.body { flex: 1; display: flex; min-height: 0; }
.side { width: 229px; flex: none; padding-top: 10px; border-right: 1px solid #f0f0f0; overflow: hidden; }
.tree2 { margin-top: 21px; }
.tree li { height: 21px; display: flex; align-items: center; white-space: nowrap; }
.tree .root { padding-left: 20px; }
.tree .root .ic { margin-right: 5px; }
.tree .leaf { padding-left: 30px; }
.tree .leaf .ic { margin-right: 6px; }
.tree .sel { background: #f5f5f5; box-shadow: inset 0 0 0 1px #dedede; margin: 0 1px; padding-left: 29px; }

.content { flex: 1; min-width: 0; display: flex; overflow: hidden; padding: 9px 0 0 21px; }
.group { flex: none; }
.g1 { width: 175px; }
.g2 { width: 211px; }
.g3 { width: 159px; }
.g4 { width: 106px; }
.g5 { width: 104px; }
.g6 { width: 260px; }
.group h2 { display: flex; align-items: center; height: 24px; font: 300 15.800px/24px "Open Sans", sans-serif; color: #1a3596; padding-right: 30px; white-space: nowrap; }
.group h2 i { flex: 1; height: 1px; background: #e2e2e2; margin-left: 4px; margin-top: 2px; }
.g6 h2 { padding-right: 0; }
.path { height: 19px; line-height: 15px; color: #2b4490; }
.items { padding-left: 13px; }
.items li { height: 21px; display: flex; align-items: center; white-space: nowrap; }
.items li > .ic, .ico, .txtic { margin-right: 2px; }
.ico { width: 16px; height: 16px; position: relative; flex: none; display: block; }
.ico .sc { position: absolute; left: 0; bottom: 0; width: 9px; height: 9px; }
.txtic { width: 16px; height: 16px; flex: none; background: #fdd0b8; font-size: 9px; line-height: 16px; color: #222; letter-spacing: -1px; overflow: hidden; text-align: center; }
.cols { display: flex; }
.cols .items { width: 212px; flex: none; }
.cols .items + .items { padding-left: 0; width: 60px; }

/* Roboto sits a pixel higher than the Hangul rows: lower the label, keep the icon in place */
.items li:not(.ko):not(.mx), .tree li:not(.ko) { padding-top: 2px; }
.items li:not(.ko):not(.mx) > .ic, .items li:not(.ko):not(.mx) > .ico, .tree li:not(.ko) > .ic { margin-top: -2px; }
```
